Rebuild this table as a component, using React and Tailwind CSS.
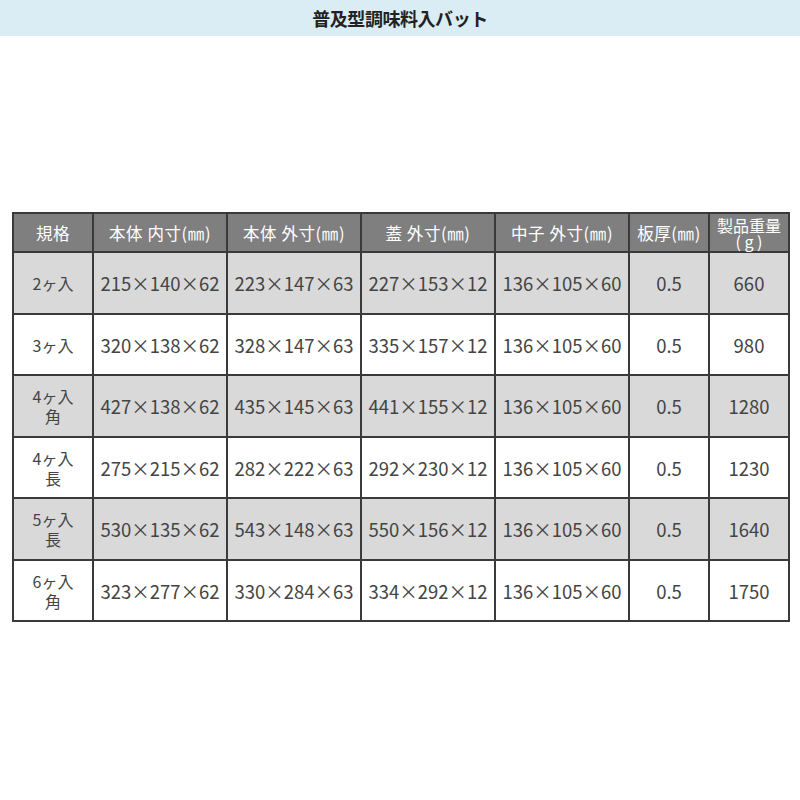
import React from 'react';

const headers = ['規格', '本体 内寸(㎜)', '本体 外寸(㎜)', '蓋 外寸(㎜)', '中子 外寸(㎜)', '板厚(㎜)', '製品重量\n( g )'];
const widths = ['w-[80px]', 'w-[134px]', 'w-[134px]', 'w-[134px]', 'w-[134px]', 'w-[80px]', 'w-[80px]'];

const rows = [
  ['2ヶ入', '215×140×62', '223×147×63', '227×153×12', '136×105×60', '0.5', '660'],
  ['3ヶ入', '320×138×62', '328×147×63', '335×157×12', '136×105×60', '0.5', '980'],
  ['4ヶ入\n角', '427×138×62', '435×145×63', '441×155×12', '136×105×60', '0.5', '1280'],
  ['4ヶ入\n長', '275×215×62', '282×222×63', '292×230×12', '136×105×60', '0.5', '1230'],
  ['5ヶ入\n長', '530×135×62', '543×148×63', '550×156×12', '136×105×60', '0.5', '1640'],
  ['6ヶ入\n角', '323×277×62', '330×284×63', '334×292×12', '136×105×60', '0.5', '1750'],
];

export default function App() {
  return (
    <div className="w-[800px] h-[800px] bg-white font-['Noto_Sans_CJK_JP','Noto_Sans',sans-serif]">
      <div className="h-9 bg-[#daedf4] flex items-center justify-center">
        <h1 className="text-[18px] font-bold text-[#222] tracking-tight">普及型調味料入バット</h1>
      </div>

      <div className="pt-[176px] px-3">
        <table className="border-collapse table-fixed w-[776px]">
          <colgroup>
            {widths.map((w, i) => <col key={i} className={w} />)}
          </colgroup>
          <thead>
            <tr className="h-[39px] bg-[#7f7f7f]">
              {headers.map((h, i) => (
                <th key={i} className={`border-2 border-[#3a3a3a] text-white font-normal whitespace-pre-line p-0 ${i === 6 ? 'text-[16px] leading-[16px]' : 'text-[16.5px] leading-[18px] tracking-[0.6px]'}`}>
                  {h}
                </th>
              ))}
            </tr>
          </thead>
          <tbody>
            {rows.map((r, ri) => (
              <tr key={ri} className={ri % 2 === 0 ? 'h-[62px] bg-[#d9d9d9]' : 'h-[61px] bg-white'}>
                {r.map((c, ci) => (
                  <td key={ci} className={`border-2 border-[#3a3a3a] text-center text-[#444] p-0 whitespace-pre-line ${ci === 0 ? 'text-[16px] leading-[20px]' : 'text-[18.5px] leading-[22px]'}`}>
                    {c}
                  </td>
                ))}
              </tr>
            ))}
          </tbody>
        </table>
      </div>
    </div>
  );
}
